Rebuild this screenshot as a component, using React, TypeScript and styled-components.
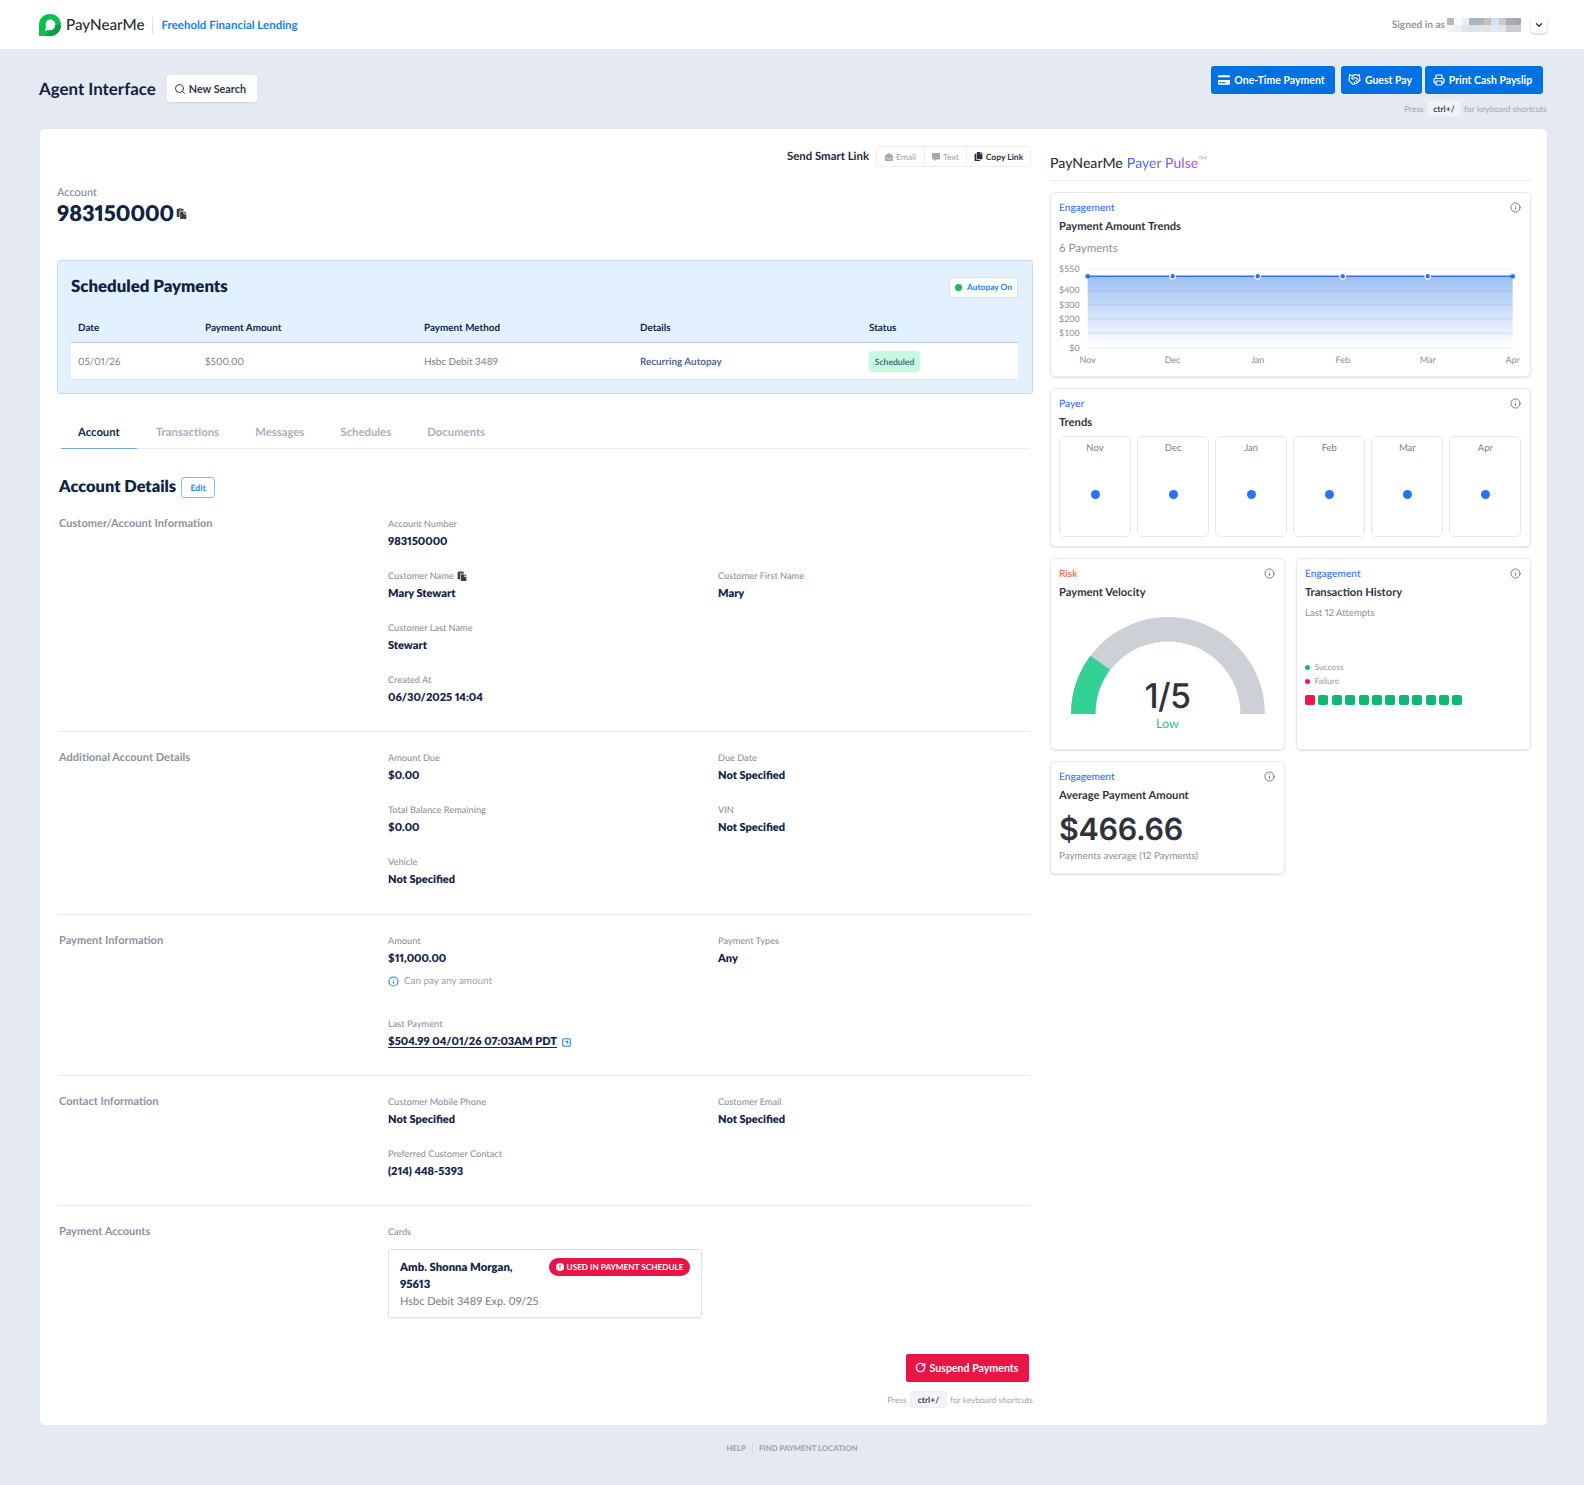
import React from 'react';
import styled, { createGlobalStyle } from 'styled-components';
import { Handshake, Printer, Search, RotateCw, Info as InfoIcon, ChevronDown } from 'lucide-react';
import { FaEnvelopeOpen, FaCommentAlt, FaCopy, FaPaste, FaCreditCard } from 'react-icons/fa';

const Global = createGlobalStyle`
  html, body { margin: 0; padding: 0; background: #e5e9f1; }
  body { font-family: "Lato", "Open Sans", sans-serif; color: #0f2342; text-rendering: geometricPrecision; font-variant-numeric: proportional-nums; }
  * { box-sizing: border-box; }
`;

const Page = styled.div`width: 1584px; height: 1485px; overflow: hidden; display: flex; flex-direction: column;`;

const Header = styled.header`
  height: 49px; background: #fff; display: flex; align-items: center; padding: 1px 37px 0 39px; flex: none;
`;
const LogoText = styled.span`font-size: 15.2px; font-weight: 500; color: #262c36; margin-left: 5px;`;
const Sep = styled.span`width: 1px; height: 17px; background: #dfe3e8; margin: 0 8px;`;
const Org = styled.span`font-size: 11.5px; font-weight: 700; color: #1b82e6;`;
const SignedIn = styled.div`margin-left: auto; display: flex; align-items: center; font-size: 10.2px; font-weight: 700; color: #8f97a3;`;
const Pixels = styled.div`display: grid; grid-template-columns: repeat(10, 7.4px); grid-template-rows: repeat(2, 7px); margin: 0 10px 0 2px;`;
const Pixel = styled.i<{ $c: string }>`background: ${p => p.$c};`;
const Caret = styled.div`width: 16px; height: 16px; border-radius: 4px; background: #fff; box-shadow: 0 1px 3px rgba(15,35,66,.25); display: flex; align-items: center; justify-content: center; color: #2a3140;`;

const TopBar = styled.div`height: 80px; flex: none; padding: 17px 37px 0 39px; display: flex; justify-content: space-between; align-items: flex-start;`;
const TitleGroup = styled.div`display: flex; align-items: center; padding-top: 9px; gap: 11px;`;
const PageTitle = styled.h1`margin: 0; font-size: 16.9px; font-weight: 700; color: #0f2342;`;
const SearchButton = styled.button`
  height: 27px; width: 90px; padding: 0 0 0 7px; background: #fff; border: 0; border-radius: 3px; font: 700 10.8px "Lato", sans-serif; color: #2d3748; white-space: nowrap;
  display: flex; align-items: center; justify-content: flex-start; gap: 3px; box-shadow: 0 1px 2px rgba(15,35,66,.1);
`;
const Actions = styled.div`display: flex; flex-direction: column; align-items: flex-end;`;
const ActionRow = styled.div`display: flex; gap: 3px; margin-right: 4px;`;
const BlueButton = styled.button<{ $w: number }>`
  height: 28px; width: ${p => p.$w}px; padding: 0 3px 1px 0; background: #0071e0; color: #fff; border: 0; border-radius: 3px; font: 700 10.5px "Lato", sans-serif; white-space: nowrap;
  display: flex; align-items: center; justify-content: center; gap: 4px;
  &:first-child { margin-right: 3px; }
`;
const Shortcut = styled.div<{ $bottom?: boolean }>`
  display: flex; align-items: center; gap: 3.5px; font-size: 8.4px; color: #a0a7b3; margin-top: ${p => p.$bottom ? 9 : 6}px;
`;
const Kbd = styled.span<{ $wide?: boolean }>`background: #f1f3f6; color: #3b4350; font-weight: 700; font-size: 8.5px; border-radius: 3px; padding: 0 ${p => p.$wide ? 6.5 : 5}px; height: 17px; display: flex; align-items: center; border: 1px solid #eceef1;`;

const Card = styled.main`
  width: 1507px; height: 1296px; flex: none; margin-left: 40px; background: #fff; border-radius: 5px; display: flex; padding: 17px 17px 0 17px;
`;
const Left = styled.section`width: 976px; flex: none; display: flex; flex-direction: column;`;
const Right = styled.aside`width: 481px; margin-left: 17px; flex: none; display: flex; flex-direction: column;`;

const SmartRow = styled.div`display: flex; justify-content: flex-end; align-items: center; gap: 7px; height: 21px; padding-right: 2px;`;
const SmartLabel = styled.span`font-size: 11.4px; font-weight: 700; color: #202a3b;`;
const Segmented = styled.div`display: flex; height: 21px; border: 1px solid #eceef1; border-radius: 3px;`;
const Segment = styled.span<{ $on?: boolean; $w: number }>`
  width: ${p => p.$w}px; display: flex; align-items: center; justify-content: center; gap: 3px; font-size: 8.5px; font-weight: ${p => p.$on ? 700 : 500}; color: ${p => p.$on ? '#2b3342' : '#a3a9b3'};
  & + & { border-left: 1px solid #eceef1; }
`;

const AccountLabel = styled.div`font-size: 11px; color: #788291; margin-top: 19px; line-height: 14px;`;
const AccountNumber = styled.div`font-size: 21.7px; font-weight: 800; color: #0f2342; display: flex; align-items: center; gap: 2px; line-height: 28px; margin-top: -1px;`;

const Scheduled = styled.div`
  margin-top: 33px; height: 134px; background: #e3f0fd; border: 1px solid #bddcf8; border-radius: 3px; padding: 0 14px 0 13px; display: flex; flex-direction: column;
`;
const SchedHead = styled.div`display: flex; justify-content: space-between; align-items: center; height: 50px;`;
const SchedTitle = styled.h2`margin: 0 0 1px; font-size: 16.8px; font-weight: 800; color: #0f2342;`;
const AutopayPill = styled.span`height: 21px; width: 69px; margin-top: 2px; justify-content: center; background: #fff; border: 1px solid #d5e4f2; border-radius: 3px; display: flex; align-items: center; gap: 5px; font-size: 8.4px; font-weight: 700; color: #1b82e6;`;
const Dot = styled.i<{ $c: string; $s?: number }>`width: ${p => p.$s ?? 7}px; height: ${p => p.$s ?? 7}px; border-radius: 50%; background: ${p => p.$c}; display: inline-block; flex: none;`;
const TableGrid = styled.div`display: grid; grid-template-columns: 127px 219px 216px 229px 1fr; padding-left: 7px; align-items: center;`;
const THead = styled(TableGrid)`height: 32px; padding-top: 3px; font-size: 9.9px; font-weight: 700; color: #14274a; border-bottom: 1px solid #c3ccd8;`;
const TRow = styled(TableGrid)`height: 37px; padding-top: 1px; background: #fff; font-size: 9.9px; color: #767f8c; border-bottom: 1px solid #dfeaf6;`;
const RecurLink = styled.span`color: #54699c; font-weight: 700;`;
const StatusPill = styled.span`justify-self: start; width: 51px; height: 21px; display: flex; align-items: center; justify-content: center; background: #c7f9e0; border-radius: 3px; font-size: 8.6px; font-weight: 700; color: #42708a;`;

const Tabs = styled.nav`display: flex; height: 38px; margin: 17px 3px 0 1px; border-bottom: 1px solid #e8ebef; align-items: stretch; padding-left: 3px; gap: 2.2px;`;
const Tab = styled.span<{ $on?: boolean }>`
  padding: 5px 17px 0; display: flex; align-items: center; font-size: 11.3px; font-weight: 700; color: ${p => p.$on ? '#14274a' : '#a9b0ba'};
  border-bottom: ${p => p.$on ? '1px solid #6aa9ea' : '0'}; height: 38px;
`;

const DetailsHead = styled.div`display: flex; align-items: center; margin: 28px 0 0 2px; height: 21px; gap: 5px;`;
const DetailsTitle = styled.h2`margin: 0; font-size: 16.4px; font-weight: 800; color: #0f2342; line-height: 19px; padding-bottom: 2px;`;
const EditButton = styled.span`width: 34px; height: 21px; border: 1px solid #83bdf3; border-radius: 3px; display: flex; align-items: center; justify-content: center; font-size: 8.6px; font-weight: 700; color: #1b82e6;`;

const DSection = styled.div<{ $h: number; $line?: boolean }>`
  height: ${p => p.$h}px; margin: 0 3px 0 2px; display: grid; grid-template-columns: 329px 330px 1fr;
  ${p => p.$line ? 'border-bottom: 1px solid #e4e7eb;' : ''}
`;
const DLabel = styled.div<{ $t: number }>`font-size: 11.05px; font-weight: 700; color: #8b94a1; padding-top: ${p => p.$t}px; line-height: 14px;`;
const FieldCol = styled.div<{ $t: number }>`padding-top: ${p => p.$t}px; display: flex; flex-direction: column;`;
const Field = styled.div<{ $h?: number }>`height: ${p => p.$h ?? 52}px;`;
const FName = styled.div`font-size: 9.2px; font-weight: 500; color: #8c95a2; line-height: 12px; display: flex; align-items: center; gap: 3px;`;
const FValue = styled.div`font-size: 11px; font-weight: 800; color: #14274a; line-height: 14px; margin-top: 5px; white-space: nowrap;`;
const Note = styled.div`display: flex; align-items: center; gap: 5px; font-size: 9.9px; color: #9aa2ad; margin-top: 9px;`;
const PayLink = styled.span`text-decoration: underline; text-underline-offset: 2px;`;
const ValueRow = styled.div`display: flex; align-items: center; gap: 5px;`;

const PayCard = styled.div`
  width: 314px; height: 69px; margin-top: 11px; border: 1px solid #dfe2e6; border-radius: 3px; box-shadow: 0 1px 2px rgba(15,35,66,.06); padding: 9px 11px; position: relative;
`;
const PayName = styled.div`font-size: 11.3px; font-weight: 800; color: #14274a; line-height: 17px; width: 130px;`;
const PaySub = styled.div`font-size: 11px; color: #737c89; line-height: 17px;`;
const UsedBadge = styled.span`
  position: absolute; top: 8px; right: 11px; height: 18px; width: 141px; justify-content: center; border-radius: 9px; background: #ea1446; color: #fff; font-size: 8.2px; font-weight: 700; display: flex; align-items: center; gap: 3px; white-space: nowrap;
`;

const BottomActions = styled.div`display: flex; flex-direction: column; align-items: flex-end; margin-top: 36px;`;
const SuspendButton = styled.button`
  width: 123px; height: 28px; margin-right: 4px; padding: 0 2px 1px 0; background: #ea1446; color: #fff; border: 0; border-radius: 2px; font: 700 10.6px "Lato", sans-serif; display: flex; align-items: center; justify-content: center; gap: 4px; white-space: nowrap;
`;

const PulseHead = styled.div`height: 35px; border-bottom: 1px solid #e8ebef; display: flex; align-items: flex-start; padding-top: 9px; font-size: 14.1px; font-weight: 500; color: #2b3038;`;
const Grad = styled.span`
  margin-left: 4px; background: linear-gradient(90deg, #2f7cf6, #c04de8); -webkit-background-clip: text; background-clip: text; color: transparent;
`;
const Tm = styled.sup`font-size: 5.5px; color: #c9a0ee; line-height: 8px;`;

const Cards = styled.div`display: grid; grid-template-columns: 235px 235px; gap: 11px; margin-top: 11px; align-items: start;`;
const Panel = styled.div<{ $wide?: boolean; $h: number }>`
  ${p => p.$wide ? 'grid-column: 1 / 3;' : ''}
  height: ${p => p.$h}px; border: 1px solid #e7e9ec; border-radius: 5px; box-shadow: 0 1px 2px rgba(15,35,66,.14); padding: 9px 8px 0; position: relative;
`;
const Kicker = styled.div<{ $risk?: boolean }>`font-size: 10.2px; font-weight: 500; color: ${p => p.$risk ? '#f2622e' : '#2e72f0'}; line-height: 13px;`;
const PanelTitle = styled.div`font-size: 11.2px; font-weight: 700; color: #2f343c; margin-top: 5px; line-height: 14px;`;
const InfoSlot = styled.span`position: absolute; top: 9px; right: 9px; width: 11px; height: 11px; display: flex; color: #6d737c;`;
const SubCount = styled.div`font-size: 11.5px; color: #8a8f98; margin-top: 8px; line-height: 14px;`;
const ChartSvg = styled.svg`display: block; margin-top: 4px; font-variant-numeric: tabular-nums;`;

const Months = styled.div`display: grid; grid-template-columns: repeat(6, 72px); gap: 6.1px; margin-top: 6px;`;
const Month = styled.div`height: 101px; border: 1px solid #e7e9ec; border-radius: 5px; display: flex; flex-direction: column; align-items: center; padding-top: 6px; font-size: 9.5px; line-height: 12px; color: #7a7f87;`;
const MonthDot = styled.i`width: 9px; height: 9px; border-radius: 50%; background: #2673f6; margin-top: 35px;`;

const Gauge = styled.div`position: relative; width: 196px; height: 126px; margin: 16px auto 0;`;
const GaugeValue = styled.div`position: absolute; left: 0; right: 0; top: 66px; text-align: center; font: 500 34px/30px "Inter", sans-serif; color: #2f343c; letter-spacing: -.5px;`;
const GaugeLow = styled.div`position: absolute; left: 0; right: 0; top: 100px; text-align: center; font-size: 12.5px; color: #2fc08a; line-height: 16px;`;
const AttemptsLabel = styled.div`font-size: 9.6px; color: #8a8f98; margin-top: 7px; line-height: 14px;`;
const Legend = styled.div`display: flex; align-items: center; gap: 4.5px; font-size: 8.5px; color: #9399a3; line-height: 14px;`;
const LegendBlock = styled.div`margin-top: 39px;`;
const Squares = styled.div`display: flex; gap: 3.4px; margin-top: 7px;`;
const Sq = styled.i<{ $c: string }>`width: 10px; height: 10px; border-radius: 2px; background: ${p => p.$c};`;
const BigAmount = styled.div`font: 600 30.5px/40px "Inter", sans-serif; color: #2f343c; margin-top: 7px; letter-spacing: -.3px;`;
const AvgSub = styled.div`font-size: 9.8px; color: #8a8f98; line-height: 13px;`;

const Footer = styled.footer`flex: 1; display: flex; justify-content: center; align-items: flex-start; padding-top: 18px; font-size: 7.8px; font-weight: 700; color: #98a1ae;`;
const FootSep = styled.span`width: 1px; height: 11px; background: #d3d8e0; margin: 0 6px;`;

const Info = () => <InfoIcon size={11} strokeWidth={2} />;

const pixelColors = ['#b4b9bf','#fafafa','#e9edf1','#aab4c2','#b0b4bb','#c4c0bc','#d3e2ee','#c3cad2','#a8adb6','#aba8ac','#f4f1ee','#ecf0f3','#dbe6ed','#d9e3ea','#e1e3e5','#e4e2e1','#dcebf5','#e1e4e9','#c8ccd3','#cfcfd3'];

function FieldBlock({ name, value, h }: { name: React.ReactNode; value: string; h?: number }) {
  return <Field $h={h}><FName>{name}</FName><FValue>{value}</FValue></Field>;
}

export default function App() {
  return (
    <Page>
      <Global />
      <Header>
        <svg width="22" height="22" viewBox="0 0 22 22">
          <path d="M0 22V10.500C0 4.500 4.800 0 11 0s11 4.800 11 11-4.800 11-11 11z" fill="#0cbf4f" />
          <path d="M6 17l1-4.500C6 8.500 8 5.500 11.200 5.500c3 0 5.200 2.300 5.200 5.400s-2.300 5.400-5.400 5.400c-.9 0-1.600-.1-2.200-.4z" fill="#fff" />
          <path d="M16.400 11c0 3-2.300 5.300-5.400 5.300L7 22h4c6 0 11-4.800 11-11z" fill="#0a9f44" />
        </svg>
        <LogoText>PayNearMe</LogoText>
        <Sep />
        <Org>Freehold Financial Lending</Org>
        <SignedIn>
          Signed in as
          <Pixels>{pixelColors.map((c, i) => <Pixel key={i} $c={c} />)}</Pixels>
          <Caret><ChevronDown size={10} strokeWidth={3} /></Caret>
        </SignedIn>
      </Header>

      <TopBar>
        <TitleGroup>
          <PageTitle>Agent Interface</PageTitle>
          <SearchButton><Search size={12} strokeWidth={2} />New Search</SearchButton>
        </TitleGroup>
        <Actions>
          <ActionRow>
            <BlueButton $w={124}><FaCreditCard size={12} />One-Time Payment</BlueButton>
            <BlueButton $w={81}><Handshake size={13} strokeWidth={2} />Guest Pay</BlueButton>
            <BlueButton $w={118}><Printer size={12} strokeWidth={2.4} />Print Cash Payslip</BlueButton>
          </ActionRow>
          <Shortcut>Press <Kbd>ctrl+/</Kbd> for keyboard shortcuts</Shortcut>
        </Actions>
      </TopBar>

      <Card>
        <Left>
          <SmartRow>
            <SmartLabel>Send Smart Link</SmartLabel>
            <Segmented>
              <Segment $w={47}><FaEnvelopeOpen size={8} />Email</Segment>
              <Segment $w={42}><FaCommentAlt size={8} />Text</Segment>
              <Segment $on $w={64}><FaCopy size={9} />Copy Link</Segment>
            </Segmented>
          </SmartRow>
          <AccountLabel>Account</AccountLabel>
          <AccountNumber>983150000 <FaPaste size={11} color="#3a4048" /></AccountNumber>

          <Scheduled>
            <SchedHead>
              <SchedTitle>Scheduled Payments</SchedTitle>
              <AutopayPill><Dot $c="#0cc14f" />Autopay On</AutopayPill>
            </SchedHead>
            <THead>
              <span>Date</span><span>Payment Amount</span><span>Payment Method</span><span>Details</span><span>Status</span>
            </THead>
            <TRow>
              <span>05/01/26</span><span>$500.00</span><span>Hsbc Debit 3489</span><RecurLink>Recurring Autopay</RecurLink><StatusPill>Scheduled</StatusPill>
            </TRow>
          </Scheduled>

          <Tabs>
            <Tab $on>Account</Tab>
            <Tab>Transactions</Tab>
            <Tab>Messages</Tab>
            <Tab>Schedules</Tab>
            <Tab>Documents</Tab>
          </Tabs>

          <DetailsHead>
            <DetailsTitle>Account Details</DetailsTitle>
            <EditButton>Edit</EditButton>
          </DetailsHead>

          <DSection $h={234} $line>
            <DLabel $t={19}>Customer/Account Information</DLabel>
            <FieldCol $t={20}>
              <FieldBlock name="Account Number" value="983150000" />
              <FieldBlock name={<>Customer Name <FaPaste size={10} color="#3a4048" /></>} value="Mary Stewart" />
              <FieldBlock name="Customer Last Name" value="Stewart" />
              <FieldBlock name="Created At" value="06/30/2025 14:04" />
            </FieldCol>
            <FieldCol $t={72}>
              <FieldBlock name="Customer First Name" value="Mary" />
            </FieldCol>
          </DSection>

          <DSection $h={183} $line>
            <DLabel $t={19}>Additional Account Details</DLabel>
            <FieldCol $t={20}>
              <FieldBlock name="Amount Due" value="$0.00" />
              <FieldBlock name="Total Balance Remaining" value="$0.00" />
              <FieldBlock name="Vehicle" value="Not Specified" />
            </FieldCol>
            <FieldCol $t={20}>
              <FieldBlock name="Due Date" value="Not Specified" />
              <FieldBlock name="VIN" value="Not Specified" />
            </FieldCol>
          </DSection>

          <DSection $h={161} $line>
            <DLabel $t={19}>Payment Information</DLabel>
            <FieldCol $t={20}>
              <Field $h={83}>
                <FName>Amount</FName>
                <FValue>$11,000.00</FValue>
                <Note>
                  <InfoIcon size={11} color="#1b82e6" strokeWidth={2.2} />
                  Can pay any amount
                </Note>
              </Field>
              <Field>
                <FName>Last Payment</FName>
                <FValue>
                  <ValueRow>
                    <PayLink>$504.99 04/01/26 07:03AM PDT</PayLink>
                    <svg width="9" height="9" viewBox="0 0 24 24" fill="none" stroke="#1b82e6" strokeWidth="3"><rect x="2" y="2" width="20" height="20" rx="3" /><path d="M9 8h7v7z" fill="#1b82e6" strokeWidth="1" /></svg>
                  </ValueRow>
                </FValue>
              </Field>
            </FieldCol>
            <FieldCol $t={20}>
              <FieldBlock name="Payment Types" value="Any" />
            </FieldCol>
          </DSection>

          <DSection $h={130} $line>
            <DLabel $t={19}>Contact Information</DLabel>
            <FieldCol $t={20}>
              <FieldBlock name="Customer Mobile Phone" value="Not Specified" />
              <FieldBlock name="Preferred Customer Contact" value="(214) 448-5393" />
            </FieldCol>
            <FieldCol $t={20}>
              <FieldBlock name="Customer Email" value="Not Specified" />
            </FieldCol>
          </DSection>

          <DSection $h={112}>
            <DLabel $t={19}>Payment Accounts</DLabel>
            <FieldCol $t={20}>
              <FName>Cards</FName>
              <PayCard>
                <PayName>Amb. Shonna Morgan, 95613</PayName>
                <PaySub>Hsbc Debit 3489 Exp. 09/25</PaySub>
                <UsedBadge>
                  <svg width="8" height="8" viewBox="0 0 24 24"><circle cx="12" cy="12" r="12" fill="#fff" /><path d="M12 5v9M12 17v2" stroke="#ea1446" strokeWidth="3" /></svg>
                  USED IN PAYMENT SCHEDULE
                </UsedBadge>
              </PayCard>
            </FieldCol>
            <div />
          </DSection>

          <BottomActions>
            <SuspendButton><RotateCw size={11} strokeWidth={3} />Suspend Payments</SuspendButton>
            <Shortcut $bottom>Press <Kbd $wide>ctrl+/</Kbd> for keyboard shortcuts</Shortcut>
          </BottomActions>
        </Left>

        <Right>
          <PulseHead>PayNearMe <Grad>Payer Pulse</Grad><Tm>TM</Tm></PulseHead>
          <Cards>
            <Panel $wide $h={185}>
              <Kicker>Engagement</Kicker>
              <PanelTitle>Payment Amount Trends</PanelTitle>
              <InfoSlot><Info /></InfoSlot>
              <SubCount>6 Payments</SubCount>
              <ChartSvg width="464" height="108" viewBox="0 0 464 108">
                <defs>
                  <linearGradient id="areaFill" x1="0" y1="0" x2="0" y2="1">
                    <stop offset="0" stopColor="#9dbff5" /><stop offset="1" stopColor="#ffffff" />
                  </linearGradient>
                </defs>
                <path d="M28.700 16.300H453.700V88H28.700z" fill="url(#areaFill)" />
                {[9, 31, 45, 59, 73, 88].map((y, i) => <line key={i} x1="28.700" x2="453.700" y1={y} y2={y} stroke={i === 0 || i === 5 ? '#eceef1' : 'rgba(140,160,200,.28)'} strokeWidth="1" />)}
                <line x1="28.700" x2="453.700" y1="16.300" y2="16.300" stroke="#2e72f0" strokeWidth="1.600" />
                {[0, 1, 2, 3, 4, 5].map(i => (
                  i === 0 || i === 5
                    ? <circle key={i} cx={28.7 + i * 85} cy="16.300" r="2.400" fill="#2e72f0" />
                    : <circle key={i} cx={28.7 + i * 85} cy="16.300" r="2.800" fill="#2e72f0" stroke="#fff" strokeWidth="1.200" />
                ))}
                {([['$550', 12], ['$400', 33], ['$300', 47.7], ['$200', 62], ['$100', 76.3], ['$0', 90.7]] as [string, number][]).map(([t, y]) => (
                  <text key={t} x="20.500" y={y} textAnchor="end" fontSize="8.800" fontFamily="Lato, sans-serif" fill="#878d96">{t}</text>
                ))}
                {['Nov', 'Dec', 'Jan', 'Feb', 'Mar', 'Apr'].map((t, i) => (
                  <text key={t} x={28.7 + i * 85} y="103" textAnchor="middle" fontSize="9" fontFamily="Lato, sans-serif" fill="#878d96">{t}</text>
                ))}
              </ChartSvg>
            </Panel>

            <Panel $wide $h={159}>
              <Kicker>Payer</Kicker>
              <PanelTitle>Trends</PanelTitle>
              <InfoSlot><Info /></InfoSlot>
              <Months>
                {['Nov', 'Dec', 'Jan', 'Feb', 'Mar', 'Apr'].map(m => <Month key={m}>{m}<MonthDot /></Month>)}
              </Months>
            </Panel>

            <Panel $h={192}>
              <Kicker $risk>Risk</Kicker>
              <PanelTitle>Payment Velocity</PanelTitle>
              <InfoSlot><Info /></InfoSlot>
              <Gauge>
                <svg width="196" height="100" viewBox="0 0 196 100">
                  <path d="M1 98a97 97 0 0 1 194 0h-24.500a72.500 72.500 0 0 0-145 0z" fill="#cdd0d6" />
                  <path d="M1 98a97 97 0 0 1 19.500-58.300l19.500 14a72.500 72.500 0 0 0-14.500 44.300z" fill="#34d196" />
                </svg>
                <GaugeValue>1/5</GaugeValue>
                <GaugeLow>Low</GaugeLow>
              </Gauge>
            </Panel>

            <Panel $h={192}>
              <Kicker>Engagement</Kicker>
              <PanelTitle>Transaction History</PanelTitle>
              <InfoSlot><Info /></InfoSlot>
              <AttemptsLabel>Last 12 Attempts</AttemptsLabel>
              <LegendBlock>
                <Legend><Dot $c="#0cb874" $s={5} />Success</Legend>
                <Legend><Dot $c="#f0144f" $s={5} />Failure</Legend>
              </LegendBlock>
              <Squares>
                {Array.from({ length: 12 }).map((_, i) => <Sq key={i} $c={i === 0 ? '#f0144f' : '#0cb874'} />)}
              </Squares>
            </Panel>

            <Panel $h={113}>
              <Kicker>Engagement</Kicker>
              <PanelTitle>Average Payment Amount</PanelTitle>
              <InfoSlot><Info /></InfoSlot>
              <BigAmount>$466.66</BigAmount>
              <AvgSub>Payments average (12 Payments)</AvgSub>
            </Panel>
          </Cards>
        </Right>
      </Card>

      <Footer>HELP<FootSep />FIND PAYMENT LOCATION</Footer>
    </Page>
  );
}
